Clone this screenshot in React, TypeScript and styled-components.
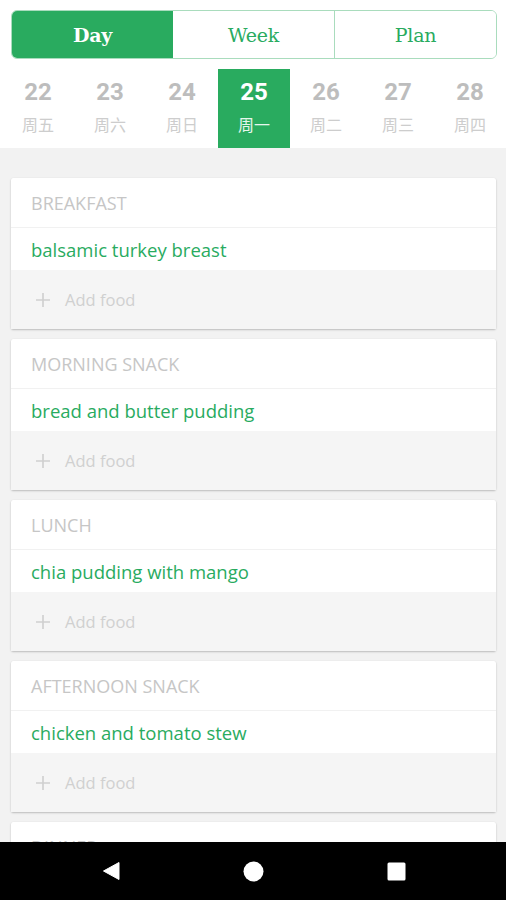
import React from "react";
import styled, { createGlobalStyle } from "styled-components";

const GREEN = "#29ab5f";

const Global = createGlobalStyle`
  html, body { margin: 0; padding: 0; background: #fff; }
  body { font-family: "Open Sans", "Noto Sans", sans-serif; }
  * { box-sizing: border-box; }
`;

const Screen = styled.div`
  width: 506px;
  height: 900px;
  display: flex;
  flex-direction: column;
  overflow: hidden;
  background: #f2f2f2;
`;

const Header = styled.div`
  background: #fff;
  padding: 10px 9px 0 11px;
  display: flex;
  flex-direction: column;
`;

const Segmented = styled.div`
  display: grid;
  grid-template-columns: 161px 161px 1fr;
  height: 49px;
  border: 1px solid #a9dcbd;
  border-radius: 6px;
  overflow: hidden;
`;

const Segment = styled.div<{ $active?: boolean; $divider?: boolean }>`
  display: flex;
  align-items: center;
  justify-content: center;
  font-family: "DejaVu Serif", "Liberation Serif", serif;
  font-size: 19px;
  font-weight: ${(p) => (p.$active ? 700 : 400)};
  color: ${(p) => (p.$active ? "#fff" : GREEN)};
  background: ${(p) => (p.$active ? GREEN : "#fff")};
  border-left: ${(p) => (p.$divider ? "1px solid #a9dcbd" : "none")};
  letter-spacing: -0.2px;
`;

const DayStrip = styled.div`
  display: grid;
  grid-template-columns: repeat(7, 72px);
  margin: 10px 0 0 -9px;
  height: 79px;
`;

const DayCell = styled.div<{ $active?: boolean }>`
  display: flex;
  flex-direction: column;
  align-items: center;
  padding-top: 8px;
  background: ${(p) => (p.$active ? GREEN : "transparent")};
  color: ${(p) => (p.$active ? "#fff" : "#bdbdbd")};
`;

const DayNum = styled.div`
  font-family: Roboto, "Liberation Sans", sans-serif;
  font-weight: 700;
  font-size: 24px;
  line-height: 30px;
`;

const DayName = styled.div<{ $active?: boolean }>`
  font-family: "Noto Sans CJK SC", sans-serif;
  font-size: 16px;
  line-height: 22px;
  margin-top: 6px;
  color: ${(p) => (p.$active ? "#e6f6ec" : "#cdcdcd")};
`;

const List = styled.div`
  flex: 1;
  overflow: hidden;
  padding: 30px 10px 0 11px;
  display: flex;
  flex-direction: column;
  gap: 10px;
`;

const Card = styled.div`
  background: #fff;
  box-shadow: 0 1px 2px rgba(0, 0, 0, 0.22), 0 0 1px rgba(0, 0, 0, 0.08);
  border-radius: 2px;
  flex-shrink: 0;
`;

const CardTitle = styled.div`
  height: 50px;
  display: flex;
  align-items: center;
  padding-left: 20px;
  font-family: "Open Sans", sans-serif;
  font-size: 18px;
  color: #c6c6c6;
  border-bottom: 1px solid #f1f1f1;
`;

const FoodRow = styled.div`
  height: 42px;
  display: flex;
  align-items: center;
  padding-left: 20px;
  font-family: "Open Sans", sans-serif;
  font-size: 18.5px;
  color: ${GREEN};
`;

const AddRow = styled.div`
  height: 59px;
  display: flex;
  align-items: center;
  padding-left: 24px;
  gap: 14px;
  background: #f5f5f5;
  font-family: "Open Sans", sans-serif;
  font-size: 16.5px;
  color: #d0d0d0;
`;

const NavBar = styled.div`
  height: 58px;
  flex-shrink: 0;
  background: #000;
  display: grid;
  grid-template-columns: repeat(3, 143px);
  align-items: center;
  justify-items: center;
  padding: 0 0 0 39px;
`;

const meals = [
  { title: "BREAKFAST", food: "balsamic turkey breast" },
  { title: "MORNING SNACK", food: "bread and butter pudding" },
  { title: "LUNCH", food: "chia pudding with mango" },
  { title: "AFTERNOON SNACK", food: "chicken and tomato stew" },
  { title: "DINNER", food: "" },
];

const days = [
  ["22", "周五"],
  ["23", "周六"],
  ["24", "周日"],
  ["25", "周一"],
  ["26", "周二"],
  ["27", "周三"],
  ["28", "周四"],
];

const Plus = () => (
  <svg width="16" height="16" viewBox="0 0 16 16">
    <path d="M8 1v14M1 8h14" stroke="#cfcfcf" strokeWidth="1.6" />
  </svg>
);

export default function App() {
  return (
    <Screen>
      <Global />
      <Header>
        <Segmented>
          <Segment $active>Day</Segment>
          <Segment>Week</Segment>
          <Segment $divider>Plan</Segment>
        </Segmented>
        <DayStrip>
          {days.map(([n, d], i) => (
            <DayCell key={n} $active={i === 3}>
              <DayNum>{n}</DayNum>
              <DayName $active={i === 3}>{d}</DayName>
            </DayCell>
          ))}
        </DayStrip>
      </Header>
      <List>
        {meals.map((m) => (
          <Card key={m.title}>
            <CardTitle>{m.title}</CardTitle>
            <FoodRow>{m.food}</FoodRow>
            <AddRow>
              <Plus />
              <span>Add food</span>
            </AddRow>
          </Card>
        ))}
      </List>
      <NavBar>
        <svg width="20" height="20" viewBox="0 0 20 20">
          <path d="M18 1.5v17L2.5 10z" fill="#fff" strokeLinejoin="round" stroke="#fff" strokeWidth="1" />
        </svg>
        <svg width="21" height="21" viewBox="0 0 21 21">
          <circle cx="10.5" cy="10.5" r="10" fill="#fff" />
        </svg>
        <svg width="19" height="19" viewBox="0 0 19 19">
          <rect x="0.5" y="0.5" width="18" height="18" rx="1.5" fill="#fff" />
        </svg>
      </NavBar>
    </Screen>
  );
}
